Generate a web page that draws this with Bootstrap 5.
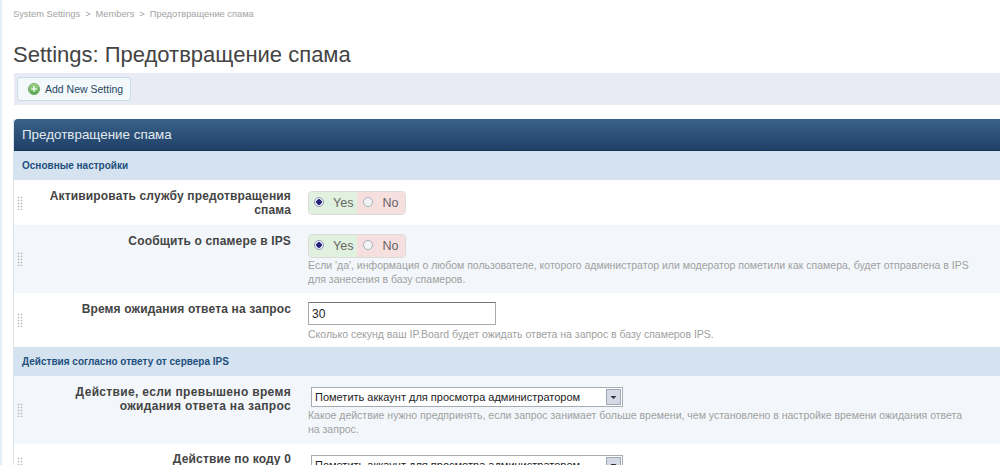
<!DOCTYPE html>
<html lang="ru">
<head>
<meta charset="utf-8">
<title>Settings: Предотвращение спама</title>
<link href="https://cdn.jsdelivr.net/npm/bootstrap@5.3.0/dist/css/bootstrap.min.css" rel="stylesheet">
<style>
html,body{height:465px;overflow:hidden}
body{font-family:"Liberation Sans",Arial,sans-serif;font-size:12px;color:#333;background:#fff;border-left:2px solid #e3eef7}
.shell{padding-left:11px}
.crumbs{height:29px;padding-top:7px;font-size:9.3px;line-height:14px;color:#a3a3a3;margin:0}
.crumbs i{font-style:normal;margin:0 5px}
.page-title{font-size:22px;line-height:26px;font-weight:400;color:#444;margin:12px 0 0;height:32px;padding-top:1px}
.toolbar{background:#e8ebf4;height:32px;padding:4px 3px;margin-bottom:14px;margin-left:1px}
.add-btn{height:24px;width:114px;border:1px solid #c6dbe5;border-radius:3px;background:#f3f8fb;color:#27475e;font-size:10.5px;line-height:22px;padding:0 0 0 10px;gap:5px}
.add-btn svg{flex:none}
.panel-box{border-left:1px solid #dbe6ef}
.panel-head{height:32px;background:linear-gradient(#3a6288,#1f4068);border-radius:4px 0 0 0;color:#e3eaf1;font-size:13.4px;line-height:31px;padding-left:8px;border-bottom:1px solid #173352}
.sub-head{height:29px;background:#d5e2ef;color:#1d4f7d;font-size:10px;font-weight:700;line-height:29px;padding-left:8px}
.opt-row{display:flex;position:relative}
.opt-row.tint{background:#f3f7fb}
.row-a{height:45px}.row-b{height:68px}.row-c{height:54px}.row-d{height:68px}.row-e{height:40px}
.grip{position:absolute;left:3px;top:50%;margin-top:-7px;width:6px;height:14px;background-image:radial-gradient(circle,#bdbdbd 0.8px,transparent 1.1px);background-size:3px 3px}
.opt-label{width:277px;flex:none;text-align:right;font-weight:700;font-size:12px;line-height:14px;letter-spacing:.15px;color:#444;padding:9px 0 0 30px}
.row-d .opt-label{letter-spacing:.33px}
.row-e .opt-label{padding-top:8px}
.opt-val{margin-left:17px;padding-top:11px;flex:1;min-width:0}
.row-b .opt-val{padding-top:9px}
.yn{display:inline-flex;height:24px;width:98px;border:1px solid #dcd9d9;border-radius:4px;overflow:hidden;font-size:12.5px;line-height:22px;color:#666}
.yn span{display:flex;align-items:center}
.yes{background:#e0f1df;width:49px;padding-left:5px;gap:9px}
.no{background:#f6dfdf;width:48px;padding-left:6px;gap:9px}
.dot{width:10px;height:10px;border-radius:50%;border:1px solid #a9b2bd;background:#f2f4f6;flex:none;margin-top:-2px}
.dot.on{background:radial-gradient(circle,#26247a 0 2.5px,#eef0fa 3px);border-color:#9298b0}
.hint{font-size:10.5px;line-height:14px;color:#a0a0a0;margin:0;max-width:665px}
.txt{display:block;width:188px;height:23px;border:1px solid #a9a9a9;border-top-color:#777;border-radius:0;padding:1px 3px;font-size:12px;background:#fff;color:#222}
.row-c .opt-val{padding-top:9px}
.row-c .hint{margin-top:2px}
.sel{display:block;width:312px;height:20px;margin-left:3px;border:1px solid #a5acb2;border-radius:0;font-size:11px;line-height:18px;padding:0 3px;background:#fff;color:#222;appearance:none;background-image:url("data:image/svg+xml,%3Csvg xmlns='http://www.w3.org/2000/svg' width='15' height='16'%3E%3Crect x='.5' y='.5' width='14' height='15' fill='%23d4d9e6' stroke='%23a0a6b4'/%3E%3Cpath d='M4.5 7h6l-3 3z' fill='%23333'/%3E%3C/svg%3E");background-repeat:no-repeat;background-position:right 1px center}
.row-d .opt-val,.row-e .opt-val{padding-top:11px}
.row-d .hint{margin-top:1px}
</style>
</head>
<body>
<div class="shell">
  <div class="crumbs">System Settings<i>&gt;</i>Members<i>&gt;</i>Предотвращение спама</div>
  <h1 class="page-title">Settings: Предотвращение спама</h1>
  <div class="toolbar">
    <button type="button" class="add-btn d-flex align-items-center">
      <svg width="12" height="12" viewBox="0 0 12 12"><defs><linearGradient id="gg" x1="0" y1="0" x2="0" y2="1"><stop offset="0" stop-color="#a6d88f"/><stop offset="1" stop-color="#4fa24a"/></linearGradient></defs><circle cx="6" cy="6" r="5.5" fill="url(#gg)" stroke="#6fa868"/><path d="M6 3.2v5.6M3.2 6h5.6" stroke="#eef8ea" stroke-width="1.6"/></svg>
      <span>Add New Setting</span>
    </button>
  </div>
  <div class="panel-box">
    <div class="panel-head">Предотвращение спама</div>
    <div class="sub-head">Основные настройки</div>
    <div class="opt-row row-a">
      <div class="grip"></div>
      <div class="opt-label">Активировать службу предотвращения спама</div>
      <div class="opt-val"><div class="yn"><span class="yes"><b class="dot on"></b>Yes</span><span class="no"><b class="dot"></b>No</span></div></div>
    </div>
    <div class="opt-row row-b tint">
      <div class="grip"></div>
      <div class="opt-label">Сообщить о спамере в IPS</div>
      <div class="opt-val"><div class="yn"><span class="yes"><b class="dot on"></b>Yes</span><span class="no"><b class="dot"></b>No</span></div>
      <p class="hint">Если 'да', информация о любом пользователе, которого администратор или модератор пометили как спамера, будет отправлена в IPS для занесения в базу спамеров.</p></div>
    </div>
    <div class="opt-row row-c">
      <div class="grip"></div>
      <div class="opt-label">Время ожидания ответа на запрос</div>
      <div class="opt-val"><input class="txt" type="text" value="30">
      <p class="hint">Сколько секунд ваш IP.Board будет ожидать ответа на запрос в базу спамеров IPS.</p></div>
    </div>
    <div class="sub-head">Действия согласно ответу от сервера IPS</div>
    <div class="opt-row row-d tint">
      <div class="grip"></div>
      <div class="opt-label">Действие, если превышено время ожидания ответа на запрос</div>
      <div class="opt-val"><select class="sel"><option>Пометить аккаунт для просмотра администратором</option></select>
      <p class="hint">Какое действие нужно предпринять, если запрос занимает больше времени, чем установлено в настройке времени ожидания ответа на запрос.</p></div>
    </div>
    <div class="opt-row row-e">
      <div class="grip"></div>
      <div class="opt-label">Действие по коду 0</div>
      <div class="opt-val"><select class="sel"><option>Пометить аккаунт для просмотра администратором</option></select></div>
    </div>
  </div>
</div>
<script src="https://cdn.jsdelivr.net/npm/bootstrap@5.3.0/dist/js/bootstrap.bundle.min.js"></script>
</body>
</html>
